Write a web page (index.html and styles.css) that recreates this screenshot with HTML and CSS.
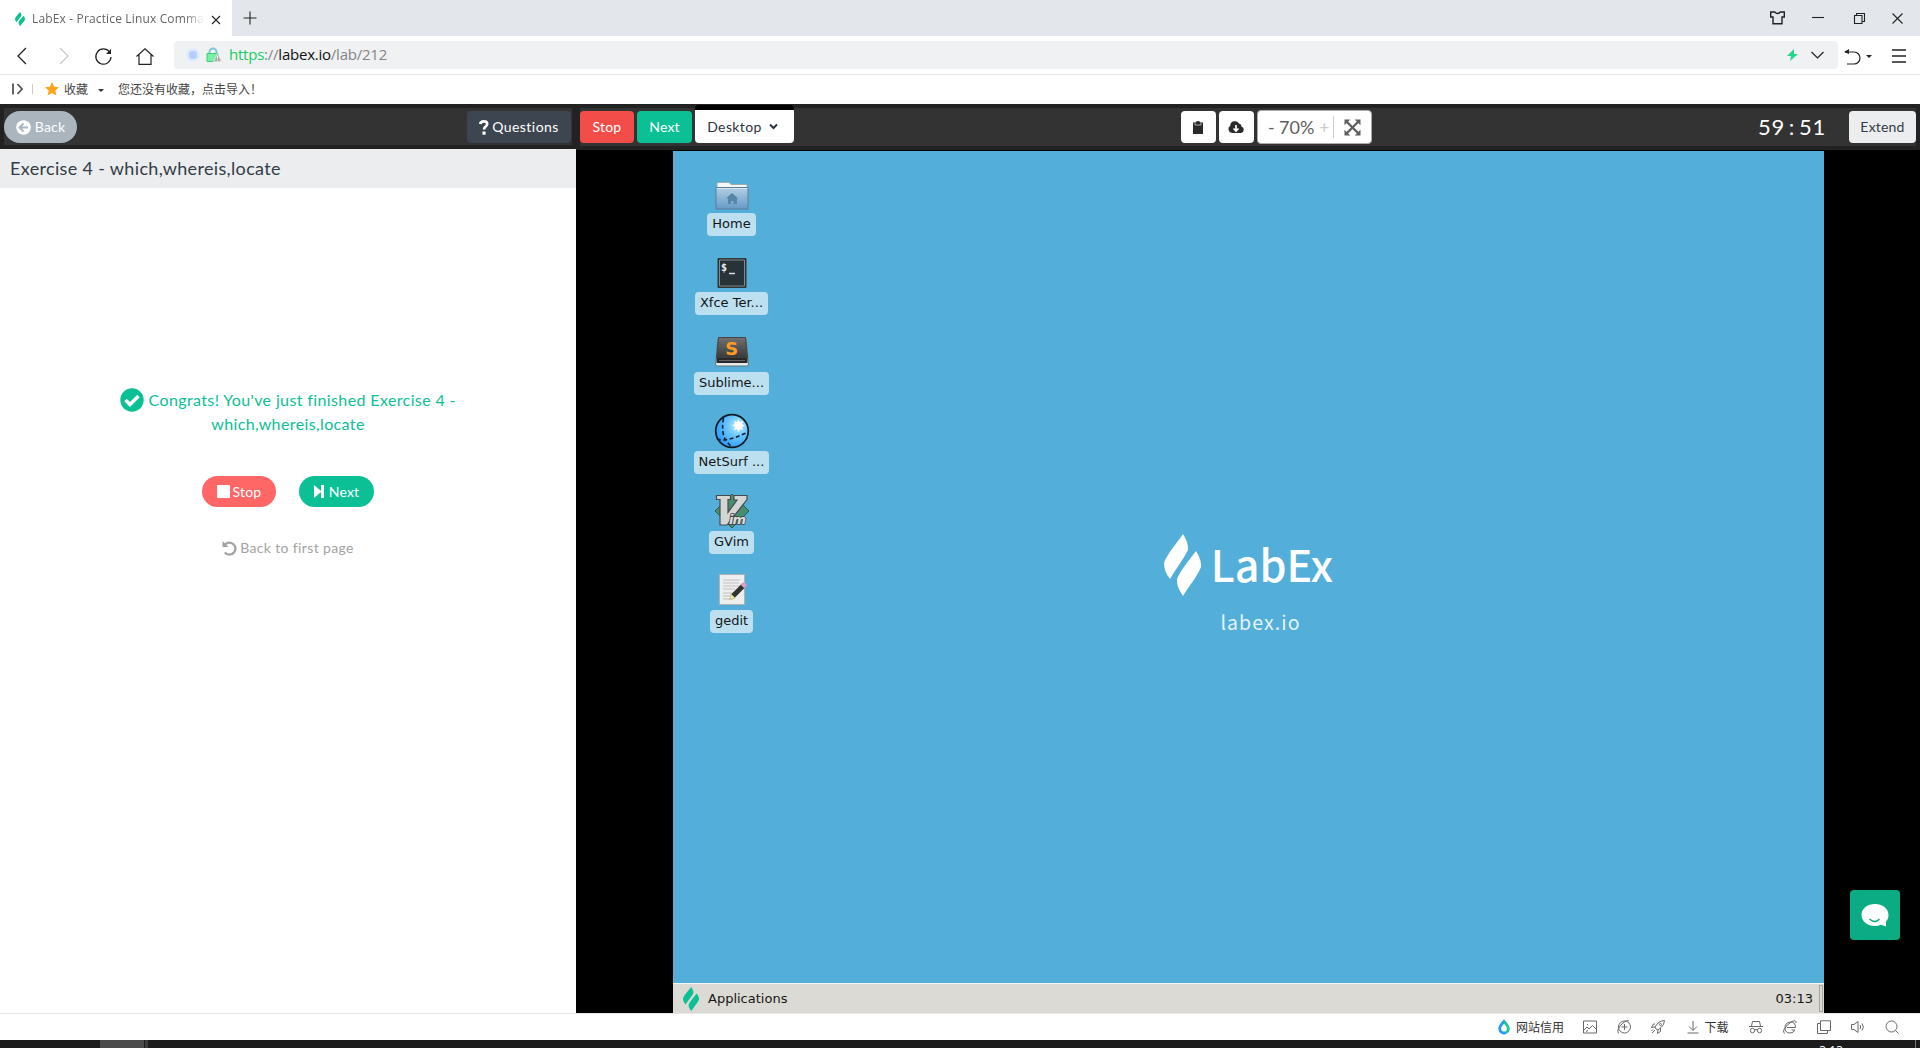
FILE: index.html
```html
<!DOCTYPE html>
<html lang="zh-CN">
<head>
<meta charset="utf-8">
<title>LabEx - Practice Linux Commands</title>
<link rel="stylesheet" href="styles.css">
</head>
<body>
<svg class="defs" width="0" height="0">
  <symbol id="leaf" viewBox="0 0 37 62" preserveAspectRatio="none"><path d="M19 0C22 5 24.500 10 24 16C19 26 11 36 6 45C2 40 0 35 0 29C3 20 13 9 19 0ZM32 17C35 22 37.500 27 37 33C33 43 25 52 19 62C15 56 12.500 51 13 45C17 36 25 26 32 17Z"/></symbol>
</svg>
<div class="browser">
  <header class="tabs">
    <div class="tab">
      <svg class="favicon" width="10" height="14"><use href="#leaf"/></svg>
      <span class="tab-title">LabEx - Practice Linux Comma</span>
      <svg class="line" width="10" height="10" viewBox="0 0 10 10"><path d="M1 1l8 8M9 1L1 9"/></svg>
    </div>
    <svg class="line new-tab" width="14" height="14" viewBox="0 0 14 14"><path d="M7 .5v13M.5 7h13"/></svg>
    <svg class="line shirt" width="15" height="14" viewBox="0 0 15 14"><path d="M.7 1h4q2.800 3 5.600 0h4v5h-2.300v6.800H3V6H.7z" stroke-width="1.400"/></svg>
    <svg class="line minimize" width="12" height="14" viewBox="0 0 12 14"><path d="M0 6.500h12"/></svg>
    <svg class="line restore" width="11" height="11" viewBox="0 0 11 11"><path d="M.5 2.500h7.500v8H.5zM2.500 2.500v-2h8v8H8"/></svg>
    <svg class="line close" width="11" height="11" viewBox="0 0 11 11"><path d="M.5.5l10 10M10.500.5l-10 10"/></svg>
  </header>
  <nav class="toolbar">
    <svg class="line" width="10" height="18" viewBox="0 0 10 18"><path d="M9 1L1 9l8 8" stroke-width="1.300"/></svg>
    <svg class="line forward" width="10" height="18" viewBox="0 0 10 18"><path d="M1 1l8 8-8 8"/></svg>
    <svg class="line reload" width="17" height="17" viewBox="0 0 17 17"><path d="M14.500 4A7.600 7.600 0 1 0 16 9" stroke-width="1.200"/><path d="M16 1v5h-5z" fill="#222" stroke="none"/></svg>
    <svg class="line home" width="18" height="17" viewBox="0 0 18 17"><path d="M.5 8.500L9 .8l8.500 7.700M3 7v9.300h12V7" stroke-width="1.200"/></svg>
    <div class="address">
      <svg width="36" height="16" viewBox="0 0 36 16"><circle cx="7" cy="8" r="6.500" fill="#d5e3fb"/><circle cx="7" cy="8" r="5" fill="#b4cffd" stroke="#f1f5ff"/><path d="M23.500 7V5a3.500 3.500 0 0 1 7 0v2" fill="none" stroke="#7ec8d8" stroke-width="2"/><path d="M21 6.500h11v8H21z" fill="#7af0a5" stroke="#38cf78"/><path d="M31.500 6.500l4 8h-8z" fill="#aaa" stroke="#eee" stroke-width=".7"/><path d="M31.500 9v2.500m0 1v1" stroke="#fff"/></svg>
      <span class="url"><span class="secure">https</span>://<b>labex.io</b>/lab/212</span>
      <svg class="bolt" width="11" height="12" viewBox="0 0 11 12"><path d="M7 0L0 7h4L3 12l8-7H7z" fill="#21d789"/></svg>
      <svg class="line drop" width="13" height="8" viewBox="0 0 13 8"><path d="M.5 1l6 6 6-6" stroke-width="1.200"/></svg>
    </div>
    <svg class="line undo" width="28" height="17" viewBox="0 0 28 17"><path d="M1 4h9a6 6 0 0 1 0 12H3" stroke-width="1.200"/><path d="M0 4l5-3v5zM22 7h6l-3 3z" fill="#222" stroke="none"/></svg>
    <svg class="line menu" width="14" height="14" viewBox="0 0 14 14"><path d="M0 1h14M0 7h14M0 13h14" stroke-width="1.300"/></svg>
  </nav>
  <div class="bookmarks">
    <svg width="22" height="12" viewBox="0 0 22 12"><path d="M1 0.500v11M5.500 1L10 6 5.500 11" fill="none" stroke="#555" stroke-width="1.800"/><path d="M20.500 1v10" stroke="#ccc"/></svg>
    <svg class="star" width="14" height="14" viewBox="0 0 14 14"><path d="M7 0l2.100 4.700 4.900.5-3.700 3.400 1.100 5L7 11l-4.400 2.600 1.100-5L0 5.200l4.900-.5z" fill="#ffa318"/></svg>
    <span>收藏</span><i class="caret"></i><span>您还没有收藏，点击导入！</span>
  </div>

  <div class="page">
    <section class="lesson">
      <div class="bar lesson-bar"><div class="bar-inner">
        <button class="btn back"><svg width="15" height="15" viewBox="0 0 15 15"><circle cx="7.500" cy="7.500" r="7.300" fill="#fff"/><path d="M12 7.500H4M7.500 3.500l-4 4 4 4" fill="none" stroke="#abb5bd" stroke-width="1.800"/></svg><span>Back</span></button>
        <button class="btn questions"><svg width="10" height="15" viewBox="0 0 10 15"><path d="M1.200 4Q1.800 1.300 4.800 1.300q3.400 0 3.400 2.700C8.200 6.500 5 6.500 5 9.500" fill="none" stroke="#fff" stroke-width="2.700"/><path d="M3.400 11.500h3.200v3.200H3.400z" fill="#fff"/></svg><span>Questions</span></button>
      </div></div>
      <h1>Exercise 4 - which,whereis,locate</h1>
      <div class="result">
        <p class="congrats"><svg width="24" height="24" viewBox="0 0 24 24"><circle cx="12" cy="12" r="11.700" fill="#0bc095"/><path d="M5.500 12l4.500 4.500 8.500-8.500" fill="none" stroke="#fff" stroke-width="3.500"/></svg> Congrats! You've just finished Exercise 4 - which,whereis,locate</p>
        <div class="actions">
          <button class="pill pill-stop"><svg width="13" height="13"><rect width="13" height="13" rx="1" fill="#fff"/></svg><span>Stop</span></button>
          <button class="pill pill-next"><svg width="10" height="13" viewBox="0 0 10 13"><path d="M0 0l7 6V0h3v13H7V7l-7 6z" fill="#fff"/></svg><span>Next</span></button>
        </div>
        <a class="restart"><svg width="15" height="15" viewBox="0 0 15 15"><path d="M2.500 4.200A6 6 0 1 1 2.800 11.500" fill="none" stroke="#a3a3a3" stroke-width="2.300"/><path d="M.5 0v6h6z" fill="#a3a3a3"/></svg><span>Back to first page</span></a>
      </div>
    </section>

    <section class="lab">
      <div class="bar lab-bar"><div class="bar-inner">
        <button class="btn stop">Stop</button>
        <button class="btn next">Next</button>
        <button class="btn desktop-pick"><span>Desktop</span><svg width="9" height="7" viewBox="0 0 9 7"><path d="M1 1.500L4.500 5 8 1.500" fill="none" stroke="#2b3440" stroke-width="2"/></svg></button>
        <button class="btn icon-btn clip"><svg width="10" height="13" viewBox="0 0 10 13"><path d="M0 1.500h2.500Q3 0 5 0t2.500 1.500H10V13H0z" fill="#2b2b2b"/><path d="M2 2v2h6V2" fill="none" stroke="#ccc" stroke-width=".8"/></svg></button>
        <button class="btn icon-btn"><svg width="16" height="12" viewBox="0 0 16 12"><path d="M4 12a4 4 0 0 1-1.800-7.300A4.700 4.700 0 0 1 11 2.600a3 3 0 0 1 2.500 3A3.300 3.300 0 0 1 13 12z" fill="#2b2b2b"/><path d="M8 4v6M5.500 7.500L8 10l2.500-2.500" fill="none" stroke="#fff" stroke-width="1.700"/></svg></button>
        <div class="zoom"><span class="minus">-</span><span class="percent">70%</span><span class="plus">+</span><i></i><svg width="17" height="17" viewBox="0 0 17 17"><path d="M3 3l11 11M14 3L3 14" stroke="#5e5e5e" stroke-width="2.300"/><path d="M.5.5h5.800L.5 6.300zM10.700.5h5.800v5.800zM.5 10.700v5.800h5.800zM16.500 10.700v5.800h-5.800z" fill="#5e5e5e"/></svg></div>
        <div class="timer">59<em>:</em>51</div>
        <button class="btn extend">Extend</button>
      </div></div>
      <div class="remote">
        <div class="wallpaper">
          <div class="shortcuts">
            <div class="shortcut"><svg width="36" height="36" viewBox="0 0 36 36"><defs><linearGradient id="fold" x2="0" y2="1"><stop stop-color="#b4cfe2"/><stop offset="1" stop-color="#659bc6"/></linearGradient></defs><path d="M3 12V6.500q0-1 1-1h11l2 2h16V13z" fill="#f5f7f7" stroke="#9caab3"/><path d="M2 10.500h32V32H2z" fill="url(#fold)" stroke="#5a7f9d"/><path d="M2.800 11.500h30.500" stroke="#d5e5ef"/><path d="M18 16l-6 5.500h2V27h3v-3h2.500v3H23v-5.500h1z" fill="#5585ab"/></svg><span>Home</span></div>
            <div class="shortcut"><svg width="36" height="36" viewBox="0 0 36 36"><path d="M4 2.500h28v29H4z" fill="#273239" stroke="#353535"/><path d="M5.500 4h25v26h-25z" fill="none" stroke="#7e8b90"/><text x="7" y="15" class="prompt">$</text><path d="M15 17.500h6" stroke="#ddd" stroke-width="1.500"/></svg><span>Xfce Ter...</span></div>
            <div class="shortcut"><svg width="36" height="36" viewBox="0 0 36 36"><defs><linearGradient id="slab" x2="0" y2="1"><stop stop-color="#707070"/><stop offset="1" stop-color="#393939"/></linearGradient></defs><path d="M4 3h28l2.500 25q0 2-2 2h-29q-2 0-2-2z" fill="#e7eaea" stroke="#677"/><path d="M4.500 1.500h27L33.500 22h-31z" fill="url(#slab)" stroke="#444"/><path d="M2.500 22h31v5h-31z" fill="#282828"/><path d="M5 24.500h26" stroke="#666"/><text x="17.700" y="18.500" class="sub-s">S</text></svg><span>Sublime...</span></div>
            <div class="shortcut"><svg width="36" height="36" viewBox="0 0 36 36"><defs><radialGradient id="globe" cx=".68" cy=".35" r=".7"><stop stop-color="#c2efff"/><stop offset=".45" stop-color="#6cc6ff"/><stop offset="1" stop-color="#2d9cfa"/></radialGradient></defs><circle cx="18" cy="16" r="16.300" fill="url(#globe)" stroke="#111b24" stroke-width="1.700"/><path d="M9.500 3Q7 17 11.500 25l6 7M3 24q8 4 31-7" fill="none" stroke="#123" stroke-width="1.600" stroke-dasharray="4 2.500"/><path d="M24.500 4l1.500 3 3-1-1 3 3 1.500-3 1.500 1 3-3-1-1.500 3-1.500-3-3 1 1-3-3-1.500 3-1.500-1-3 3 1z" fill="#fff"/></svg><span>NetSurf ...</span></div>
            <div class="shortcut"><svg width="36" height="36" viewBox="0 0 36 36"><path d="M18-1l17 17-17 17L1 16z" fill="#478d71" stroke="#285e4c"/><path d="M2.500.5h14v4h-2.500v13L23 5h-3V.5h13v4L13 30H6V4.500H2.500z" fill="#d4d6d5" stroke="#464b4a" stroke-width="1.200"/><text x="15" y="28.500" class="vim-im">im</text></svg><span>GVim</span></div>
            <div class="shortcut"><svg width="36" height="36" viewBox="0 0 36 36"><path d="M5.500.5h25v30h-25z" fill="#eee" stroke="#afb4b6"/><path d="M9 6h17M9 9h16M9 12h17M9 15h12M9 19h13M9 22h9M9 25h10" stroke="#c0c0c0"/><path d="M19 22L30 11" stroke="#333" stroke-width="5"/><path d="M28.500 12.500l3-3" stroke="#df9fc8" stroke-width="5"/><path d="M17 20l-1.500 5.500L21 24z" fill="#eee5a0" stroke="#aaa36e" stroke-width=".5"/></svg><span>gedit</span></div>
          </div>
          <div class="brand"><svg width="37" height="62"><use href="#leaf"/></svg><span>LabEx</span></div>
          <div class="brand-url">labex.io</div>
        </div>
        <div class="panel"><svg class="favicon" width="16" height="24"><use href="#leaf"/></svg><span class="apps">Applications</span><span class="clock">03:13</span><i></i></div>
      </div>
      <button class="chat"><svg width="28" height="23" viewBox="0 0 28 23"><path d="M14 0c7.500 0 13.500 4.500 13.500 11 0 3-1 5-2.500 6.500v5l-5-1.800Q17 22 14 22C6.500 22 .5 17.500.5 11S6.500 0 14 0z" fill="#fff"/><path d="M8.500 15q5.500 5 10 0" fill="none" stroke="#0bac83" stroke-width="1.500"/></svg></button>
    </section>
  </div>

  <footer class="status">
    <svg class="credit" width="12" height="16" viewBox="0 0 12 16"><path d="M6 2.500Q1.700 7 1.700 9.700a4.300 4.300 0 0 0 6.300 3.800" fill="none" stroke="#249bf5" stroke-width="2.800"/><path d="M6 2.500q4.300 4.500 4.300 7.200A4.300 4.300 0 0 1 8 13.500" fill="none" stroke="#22c78c" stroke-width="2.800"/><path d="M4.200 3.200L6 0l1.800 3.200z" fill="#249bf5" stroke="none"/></svg><span class="credit-label">网站信用</span>
    <svg viewBox="0 0 14 14"><path d="M.5 1h13v12H.5zM1 10l3-3 2 2 3.500-3.500L13 9M4 4.500h1M3 11.500l2-1"/></svg>
    <svg viewBox="0 0 14 14"><circle cx="7.500" cy="7" r="6"/><path d="M7.500 4v6M4.500 7h6M1.500 13.500Q-1 9 6 3q4.500-3.500 6-2"/></svg>
    <svg viewBox="0 0 14 14"><path d="M5 9L4 7l3-4q3-2.500 6.500-2.500Q13 5 10.500 7L7 10zM4 4H2.500L.5 7.500 4 7M7 10l-.5 3.500 3-2V8M4 10l-3 3M2 9.500L.5 11"/><circle cx="9.500" cy="4.500" r="1"/></svg>
    <svg viewBox="0 0 14 14" class="download"><path d="M7 1v9M3 6.500l4 4 4-4M1.500 13h11"/></svg><span class="download-label">下载</span>
    <svg viewBox="0 0 14 14"><path d="M2.500 6l1-4.500h7l1 4.500M0 6.500h14M5.500 10q1.500-1 3 0"/><circle cx="3.500" cy="10.500" r="2.200"/><circle cx="10.500" cy="10.500" r="2.200"/></svg>
    <svg viewBox="0 0 14 14"><path d="M4 7.500h8.500Q12.500 2 7.500 2 2 2.500 2 7.500 2 13 7 13q3.500 0 5-3H8.500M2 13.500q-2.500-.5-1-4Q3.500 4.500 9 1.500q4.500-2 4 1.500"/></svg>
    <svg viewBox="0 0 14 14"><path d="M3.500.8h10v9.700h-10zM3.500 3.500h-3v10h10v-3"/></svg>
    <svg viewBox="0 0 14 14"><path d="M.5 4.500h2.500L7 1.500v11L3 9.500H.500zM9 5q1.500 2 0 4M11 3.500q2.800 3.500 0 7" /></svg>
    <svg viewBox="0 0 14 14"><circle cx="6.500" cy="6.500" r="5.500"/><path d="M10.500 10.500l3 3"/></svg>
  </footer>
  <div class="taskbar"><i class="task"></i><i class="task-edge"></i><span>3:13</span><i class="peek"></i></div>
</div>
</body>
</html>
```
FILE: styles.css
```css
* { box-sizing: border-box; }
body { margin: 0; background: #fff; font-family: Lato, sans-serif; overflow: hidden; }
svg { display: block; flex: none; overflow: visible; }
.defs { position: absolute; }
button { border: 0; padding: 0; margin: 0; font: inherit; }
.browser { width: 1920px; height: 1048px; display: flex; flex-direction: column; overflow: hidden; }
.line { fill: none; stroke: #222; stroke-width: 1.1; }
.favicon { fill: #0bc095; }

/* Browser chrome */
.tabs { height: 36px; background: #e3e6eb; display: flex; align-items: center; flex: none; }
.tab { width: 232px; height: 36px; background: #fff; display: flex; align-items: center; padding: 2px 0 0 15px; }
.tab-title { width: 174px; margin: 0 6px 0 7px; overflow: hidden; white-space: nowrap; font: 12px/20px "Open Sans", sans-serif; letter-spacing: .15px; color: #666; -webkit-mask-image: linear-gradient(90deg, #000 88%, transparent 99%); mask-image: linear-gradient(90deg, #000 88%, transparent 99%); }
.tab .line { margin: 2px 0 0 -1px; }
.new-tab { margin-left: 11px; }
.shirt { margin-left: auto; }
.minimize { margin-left: 27px; }
.restore { margin-left: 30px; }
.close { margin: 0 17px 0 27px; }
.toolbar { height: 39px; border-bottom: 1px solid #e7e7e9; display: flex; align-items: center; padding: 2px 14px 0 17px; flex: none; }
.forward { margin-left: 32px; stroke: #c4c4c4; }
.reload { margin-left: 26px; }
.home { margin-left: 24px; }
.address { width: 1664px; height: 28px; border-radius: 4px; margin: -2px 0 0 20px; background: #eff1f3; display: flex; align-items: center; padding: 0 14px 0 12px; }
.url { margin-left: 7px; font: 15px/27px "Open Sans", sans-serif; letter-spacing: -.23px; height: 28px; color: #858585; }
.url b { font-weight: 400; color: #111; }
.secure { color: #16cd62; }
.bolt { margin-left: auto; }
.drop { margin-left: 13px; }
.undo { margin-left: 6px; }
.menu { margin-left: auto; }
.bookmarks { height: 29px; display: flex; align-items: center; padding: 0 0 2px 12px; flex: none; color: #444; font: 12px/20px "Noto Sans CJK SC", sans-serif; }
.star { margin: 1px 5px 0 11px; }
.caret { border: 3px solid transparent; border-top-color: #333; border-bottom: 0; margin: 3px 14px 0 10px; }

/* Application */
.page { height: 909px; display: flex; flex: none; }
.lesson { width: 576px; }
.bar { background: #222; padding: 4px; }
.bar-inner { background: #333; display: flex; height: 100%; }
.lesson-bar { height: 45px; }
.lesson-bar .bar-inner { justify-content: space-between; padding-right: 1px; }
.btn { height: 32px; margin-top: 3px; border-radius: 4px; display: flex; align-items: center; justify-content: center; font-size: 14px; line-height: 20px; letter-spacing: .2px; color: #fff; flex: none; }
.back { width: 73px; border-radius: 16px; background: #abb5bd; gap: 4px; }
.questions { width: 104px; background: #3d4650; gap: 3px; letter-spacing: .45px; }
h1 { height: 39px; margin: 0; padding-left: 10px; background: #ebedef; color: #333c46; font: 400 18px/38px Lato, sans-serif; letter-spacing: .34px; }
.result { padding-top: 200px; display: flex; flex-direction: column; align-items: center; }
.congrats { width: 350px; margin: 0; text-align: center; color: #0bc095; font-size: 16px; line-height: 24px; letter-spacing: .38px; }
.congrats svg { display: inline-block; vertical-align: -6px; }
.actions { display: flex; gap: 23px; margin-top: 40px; }
.pill { height: 31px; border-radius: 16px; display: flex; align-items: center; justify-content: center; color: #fff; font-size: 14px; letter-spacing: .2px; }
.pill-stop { width: 74px; gap: 3px; background: #ff6666; }
.pill-next { width: 75px; gap: 5px; background: #0bc095; }
.restart { margin-top: 31px; display: flex; align-items: center; gap: 3px; color: #a3a3a3; font-size: 14px; line-height: 20px; letter-spacing: .36px; }
.lab { width: 1344px; background: #000; position: relative; }
.lab-bar { height: 46px; }
.stop { width: 54px; background: #f24d49; }
.next { width: 55px; margin-left: 3px; background: #0bc095; }
.desktop-pick { width: 99px; height: 38px; margin: -3px 0 0 3px; border-top: 5px solid #000; background: #fff; color: #2b3440; gap: 7px; padding-right: 4px; letter-spacing: .4px; }
.clip { margin-left: 387px !important; }
.icon-btn { width: 35px; margin-left: 3px; background: #fff; padding-right: 1px; }
.zoom { width: 115px; height: 34px; margin: 2px 0 0 3px; border: 1px solid #aaa; border-radius: 4px; background: #fff; display: flex; align-items: center; color: #5e5e5e; font-size: 18px; padding-left: 10px; }
.minus { width: 11px; }
.percent { width: 40px; }
.plus { color: #ccc; }
.zoom i { width: 1px; height: 22px; background: #ccc; margin: 0 10px 0 4px; }
.timer { width: 68px; margin-left: auto; color: #fff; font-size: 22px; line-height: 38px; letter-spacing: .8px; display: flex; justify-content: space-between; }
.timer em { font-style: normal; }
.extend { width: 67px; margin-left: 23px; background: #ebedef; color: #333c46; }

/* Remote desktop */
.remote { width: 1151px; margin: 1px 0 0 97px; }
.wallpaper { height: 832px; background: #53aed9; position: relative; display: flex; flex-direction: column; align-items: center; padding-top: 383px; color: #fff; }
.shortcuts { position: absolute; left: 8.500px; top: 26px; width: 100px; }
.shortcut { height: 79.4px; display: flex; flex-direction: column; align-items: center; }
.shortcut span { height: 23px; border-radius: 4px; background: #bce0f0; padding: 0 5px; color: #151515; font: 13px/22.500px "DejaVu Sans", sans-serif; white-space: nowrap; }
.prompt { font: bold 10px "DejaVu Sans Mono", monospace; fill: #eee; }
.sub-s { font: bold 18px "DejaVu Sans", sans-serif; fill: #ff9a22; text-anchor: middle; }
.vim-im { font: italic bold 13px "DejaVu Sans", sans-serif; fill: #ddd; stroke: #444; stroke-width: 1.6px; paint-order: stroke; letter-spacing: -1px; }
.brand { display: flex; height: 62px; fill: #fff; font: 500 43px/59px "Noto Sans CJK SC", sans-serif; }
.brand span { margin-left: 10px; }
.brand-url { font: 19.500px/28px "Noto Sans CJK SC", sans-serif; letter-spacing: 1.1px; margin: 12px 0 0 24px; color: #e5f4fa; }
.panel { height: 30px; border-top: 1px solid #f5f5f2; background: #dcdad5; display: flex; align-items: center; padding-left: 10px; color: #161616; font: 13px/20px "DejaVu Sans", sans-serif; }
.apps { margin-left: 9px; }
.clock { margin-left: auto; }
.panel i { width: 4px; height: 27px; border: 1px solid #a5a39e; margin: 0 1px 0 6px; }
.chat { position: absolute; right: 20px; top: 786px; width: 50px; height: 50px; border-radius: 4px; background: #0bac83; display: grid; place-items: center; }

/* Browser status bar and system taskbar */
.status { height: 27px; flex: none; border-top: 1px solid #e7e7e7; background: #fff; padding: 0 0 1px 1498px; display: flex; align-items: center; font: 12px/20px "Noto Sans CJK SC", sans-serif; color: #333; white-space: nowrap; }
.status svg { width: 14px; height: 14px; fill: none; stroke: #686868; margin-right: 20.200px; }
.status .credit { width: 12px; height: 16px; margin-right: 6px; }
.credit-label { flex: none; margin-right: 19px; }
.status .download { margin-right: 5px; }
.download-label { flex: none; margin-right: 20px; }
.taskbar { height: 8px; background: #1c1c1c; display: flex; overflow: hidden; color: #fff; font: 12px/16px "Open Sans", sans-serif; }
.task { width: 44px; margin-left: 100px; background: #4b4b4b; }
.task-edge { width: 3px; margin-left: 1px; background: #3c3c3c; }
.taskbar span { margin: 3px 72px 0 auto; }
.peek { width: 1px; margin-right: 4px; background: #777; }
```
